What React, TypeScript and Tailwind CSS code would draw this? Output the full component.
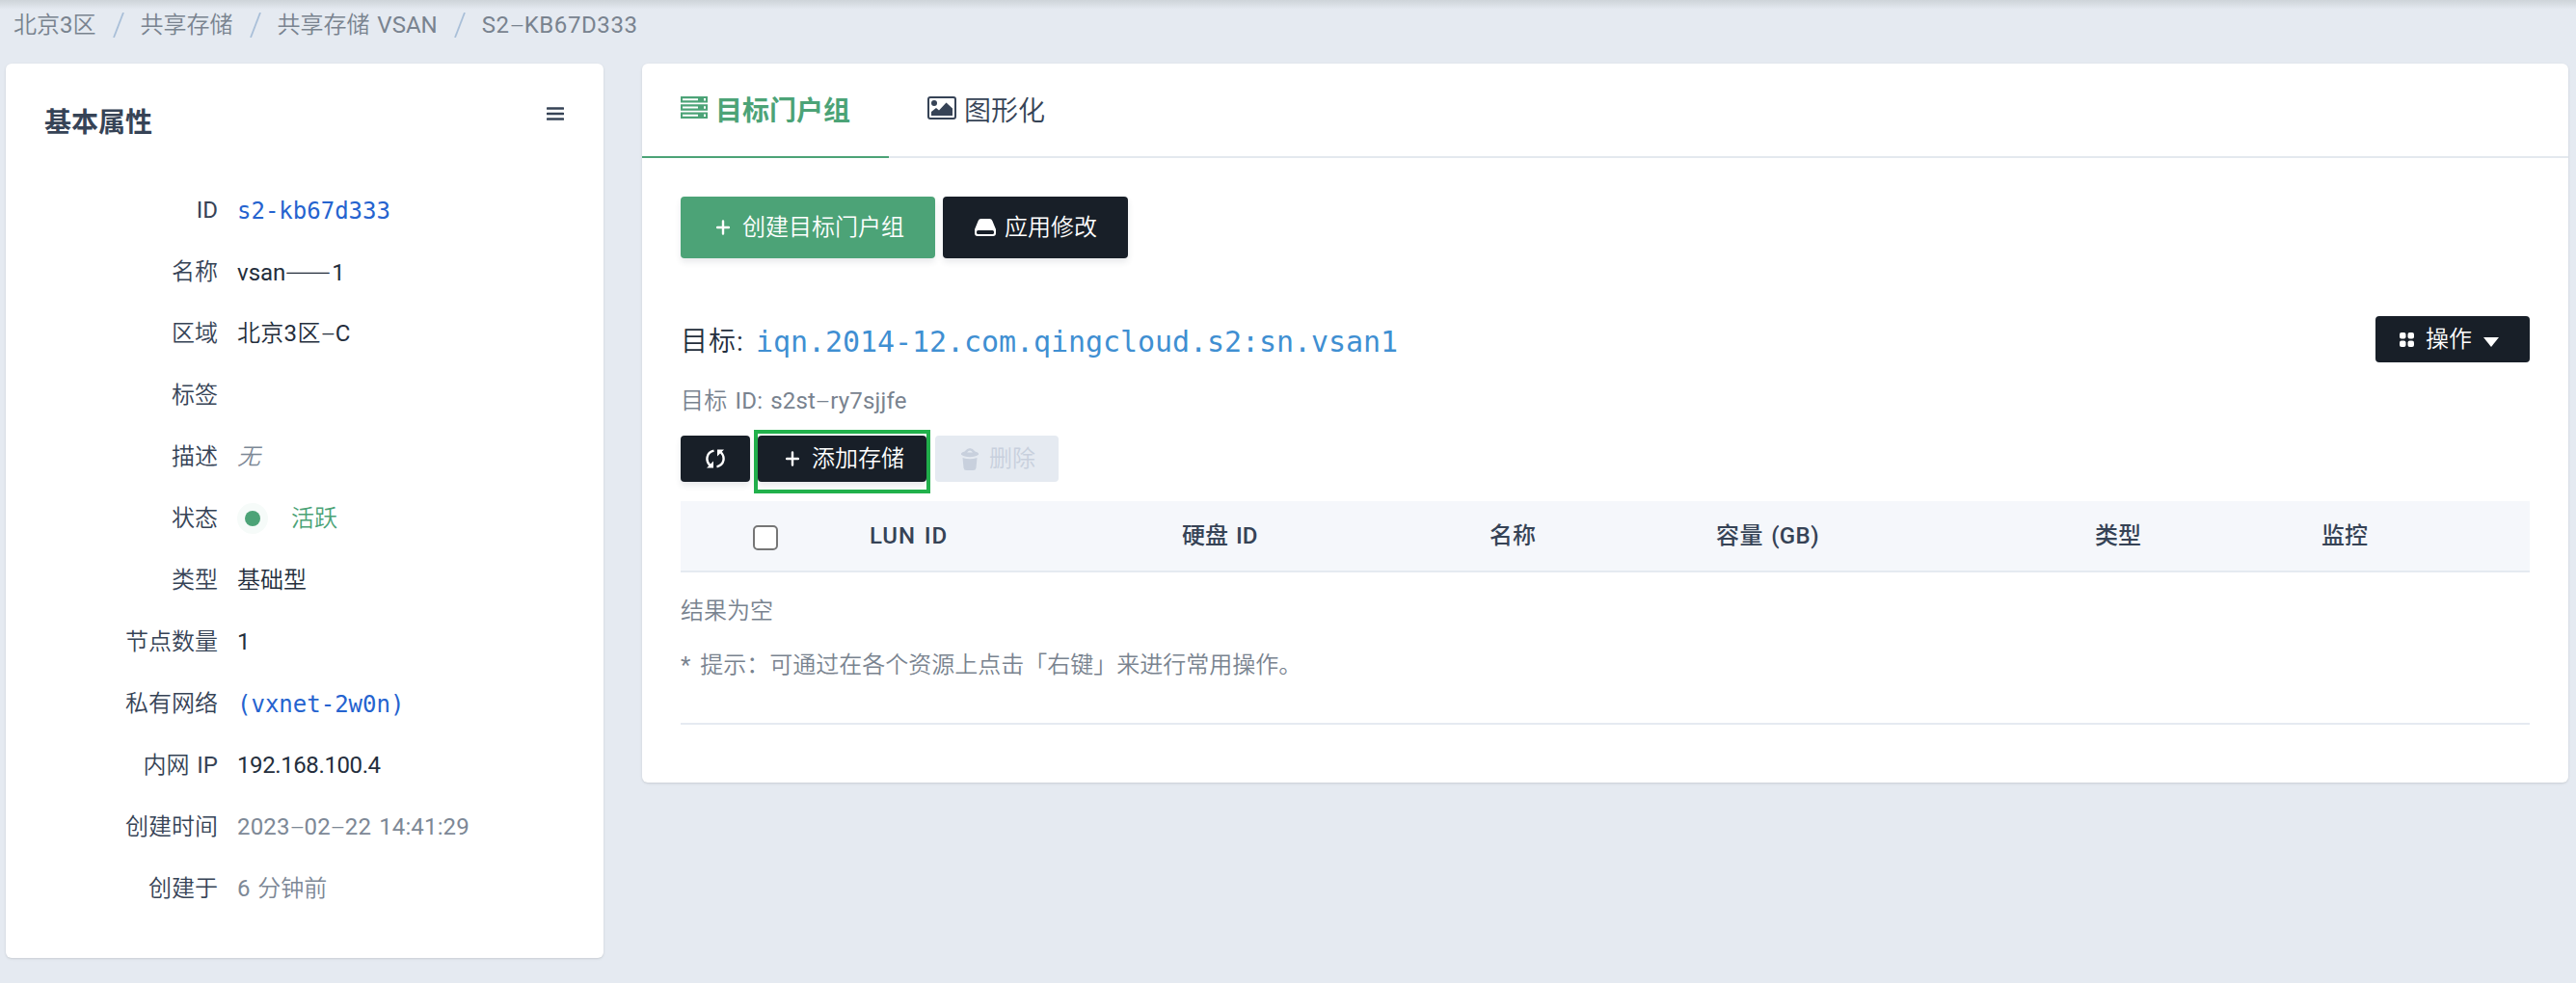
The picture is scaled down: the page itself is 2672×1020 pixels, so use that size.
import React from "react";

const sans = "font-['Roboto','Noto_Sans_CJK_SC',sans-serif]";
const mono = "font-['DejaVu_Sans_Mono','Noto_Sans_CJK_SC',monospace]";
const lift = "shadow-[0_4px_6px_rgba(36,46,66,0.1)]";

function Plus() {
  return (
    <svg width="14" height="16" viewBox="0 0 14 16" className="shrink-0">
      <path d="M7 1.5v13M1 8h12" stroke="currentColor" strokeWidth="2.4" strokeLinecap="round" />
    </svg>
  );
}

function Servers() {
  return (
    <svg width="28" height="23" viewBox="0 0 28 23" fill="currentColor" fillRule="evenodd" className="mb-[5px] shrink-0">
      <path d="M0 0h28v6.500H0zM2 2.200v2h16v-2zM24 2h2v2.500h-2z" />
      <path d="M0 8.200h28v6.500H0zM2 10.400v2h16v-2zM24 10.200h2v2.500h-2z" />
      <path d="M0 16.500h28V23H0zM2 18.700v2h16v-2zM24 18.500h2V21h-2z" />
    </svg>
  );
}

function Picture() {
  return (
    <svg width="30" height="24" viewBox="0 0 30 24" className="mb-1 shrink-0">
      <rect x="1" y="1" width="28" height="22" rx="2" fill="none" stroke="currentColor" strokeWidth="2" />
      <circle cx="7" cy="7" r="3" fill="currentColor" />
      <path d="M4 20v-4l5-4 3 2.500 7.500-8L26 12.500V20z" fill="currentColor" />
    </svg>
  );
}

function Drive() {
  return (
    <svg width="22" height="18" viewBox="0 0 22 18" className="shrink-0">
      <path
        d="M6.500 0h9q2 0 2.800 2L22 11v4q0 3-3 3H3q-3 0-3-3v-4L3.700 2Q4.500 0 6.500 0zM3.500 12Q2 12 2 13.500v1Q2 16 3.500 16h15q1.500 0 1.500-1.500v-1Q20 12 18.500 12z"
        fill="currentColor"
        fillRule="evenodd"
      />
    </svg>
  );
}

function Refresh() {
  return (
    <svg width="20" height="20" viewBox="0 0 20 20" className="shrink-0">
      <path d="M8.500 1.700C.5 3.500-.5 12 4.500 17M11.500 18.300c8-1.800 9-10.300 4-15.300" fill="none" stroke="currentColor" strokeWidth="2.400" />
      <path d="M1 19.500h7v-7zM19 .500h-7v7z" fill="currentColor" />
    </svg>
  );
}

function Trash() {
  return (
    <svg width="18" height="23" viewBox="0 0 18 23" fill="currentColor" className="shrink-0">
      <path d="M0 5.500Q1 3.800 3.500 3.400 6 .2 9 0q3 .2 5.500 3.400 2.500.4 3.500 2.100v1.300q-3 2.400-9 2.400T0 6.800zM6 4.600h6Q10.500 2.400 9 2.400T6 4.600z" fillRule="evenodd" />
      <path d="M1.500 10Q9 12.500 16.500 10l-1 10.500Q15.200 23 12.500 23h-7q-2.700 0-3-2.500z" />
    </svg>
  );
}

/* Sets Latin runs a step heavier than the Chinese text and draws hyphens wide. */
function Mixed({ text }: { text: string }) {
  return (
    <>
      {text.split(/([!-,.-~]+|-)/).map((p, i) => {
        if (p === "-") {
          return (
            <span key={i} className="inline-block w-[15px] scale-x-[2.100] text-center font-light tracking-normal">
              -
            </span>
          );
        }
        return i % 2 ? (
          <span key={i} className="font-normal">
            {p}
          </span>
        ) : (
          p
        );
      })}
    </>
  );
}

const crumbs = [
  { text: "北京3区", tracking: "" },
  { text: "共享存储", tracking: "" },
  { text: "共享存储 VSAN", tracking: "" },
  { text: "S2-KB67D333", tracking: "tracking-[0.600px]" },
];

const rows: { label: string; value: React.ReactNode }[] = [
  { label: "ID", value: <span className={`${mono} relative top-px text-[#2563cf]`}>s2-kb67d333</span> },
  {
    label: "名称",
    value: (
      <>
        <span className="font-normal">vsan</span>
        <span className="relative -top-px inline-block w-12 origin-left scale-x-[1.170] font-['Noto_Sans_CJK_SC']">——</span>
        <span className="font-normal">1</span>
      </>
    ),
  },
  {
    label: "区域",
    value: (
      <span className="tracking-[0.300px]">
        <Mixed text="北京3区-C" />
      </span>
    ),
  },
  { label: "标签", value: "" },
  { label: "描述", value: <span className="text-[#7d8896] italic">无</span> },
  {
    label: "状态",
    value: (
      <span className="flex items-center text-[#4ca377]">
        <span className="mr-6 flex size-8 items-center justify-center rounded-full bg-[#f6fbf9]">
          <span className="size-4 rounded-full bg-[#4ca377]" />
        </span>
        活跃
      </span>
    ),
  },
  { label: "类型", value: "基础型" },
  { label: "节点数量", value: <Mixed text="1" /> },
  { label: "私有网络", value: <span className={`${mono} relative top-px text-[#2563cf]`}>(vxnet-2w0n)</span> },
  {
    label: "内网 IP",
    value: (
      <span className="tracking-[-0.400px]">
        <Mixed text="192.168.100.4" />
      </span>
    ),
  },
  {
    label: "创建时间",
    value: (
      <span className="tracking-[0.150px] text-[#7d8896]">
        <Mixed text="2023-02-22 14:41:29" />
      </span>
    ),
  },
  {
    label: "创建于",
    value: (
      <span className="text-[#7d8896]">
        <Mixed text="6 分钟前" />
      </span>
    ),
  },
];

const columns = [
  { name: "LUN ID", width: "w-[324px]", tracking: "tracking-[0.900px]" },
  { name: "硬盘 ID", width: "w-[319px]", tracking: "" },
  { name: "名称", width: "w-[235px]", tracking: "" },
  { name: "容量 (GB)", width: "w-[393px]", tracking: "tracking-[0.400px]" },
  { name: "类型", width: "w-[235px]", tracking: "" },
  { name: "监控", width: "w-[120px]", tracking: "" },
];

export default function App() {
  return (
    <div className={`h-[1020px] w-[2672px] overflow-hidden bg-[#e5eaf1] text-2xl font-[350] text-[#364356] [word-spacing:2px] ${sans}`}>
      <div className="h-2.5 bg-linear-to-b from-[#ced4d9] to-[#e5eaf1]" />
      <nav className="flex h-14 items-start pt-px pl-3.5 text-[#79838f]">
        {crumbs.map((c, i) => (
          <div key={c.text} className={`flex items-center leading-[30px] ${c.tracking}`}>
            {i > 0 && (
              <svg width="12" height="26" viewBox="0 0 12 26" className="mr-[17px] ml-[17px]">
                <path d="M11 0 1 26" stroke="#a9bfd8" strokeWidth="1.800" />
              </svg>
            )}
            <span>
              <Mixed text={c.text} />
            </span>
          </div>
        ))}
      </nav>

      <main className="flex items-start gap-10 pl-1.5">
        <aside className="h-[928px] w-[620px] rounded-md bg-white px-10 pt-10 shadow-sm">
          <header className="flex h-20 items-start justify-between">
            <h2 className="mt-0.5 text-[28px] leading-10 font-bold">基本属性</h2>
            <svg width="18" height="14" viewBox="0 0 18 14" className="mt-[5px] mr-px">
              <path d="M1 1.500h16M1 7h16M1 12.500h16" stroke="currentColor" strokeWidth="2.600" strokeLinecap="round" />
            </svg>
          </header>
          <dl>
            {rows.map((r) => (
              <div key={r.label} className="flex h-16 items-center gap-5 whitespace-nowrap">
                <dt className="w-[180px] text-right">
                  <Mixed text={r.label} />
                </dt>
                <dd className="text-[#242e3c]">{r.value}</dd>
              </div>
            ))}
          </dl>
        </aside>

        <section className="h-[746px] w-[1998px] rounded-md bg-white shadow-sm">
          <div className="flex h-[98px] border-b-2 border-[#e4e9ee] text-[28px]">
            <div className="-mb-0.5 flex w-64 items-center gap-2 border-b-2 border-[#4ca377] pl-10 font-bold text-[#4ca377]">
              <Servers />
              <span className="mt-1">目标门户组</span>
            </div>
            <div className="flex items-center gap-2 pl-10">
              <Picture />
              <span className="mt-1">图形化</span>
            </div>
          </div>
          <div className="px-10 pt-10">
            <div className="flex gap-2 text-white">
              <button className={`flex h-16 w-[264px] items-center gap-[13px] rounded bg-[#4ca377] pl-[37px] ${lift}`}>
                <Plus />
                创建目标门户组
              </button>
              <button className={`flex h-16 w-48 items-center gap-[9px] rounded bg-[#181f28] pl-[33px] ${lift}`}>
                <Drive />
                应用修改
              </button>
            </div>

            <div className="mt-[60px] flex items-start justify-between">
              <h3 className="flex items-center text-[28px] leading-[54px] text-[#242e3c]">
                <span className="w-[78px] tracking-[1px]">
                  <Mixed text="目标:" />
                </span>
                <span className={`${mono} text-[30px] tracking-[-0.060px] text-[#3f8fd2]`}>iqn.2014-12.com.qingcloud.s2:sn.vsan1</span>
              </h3>
              <button className="flex h-12 w-40 items-center rounded bg-[#181f28] pl-[25px] text-white">
                <svg width="15" height="15" viewBox="0 0 15 15" fill="currentColor" className="mr-3">
                  <rect width="6.500" height="6.500" rx="2" />
                  <rect x="8.500" width="6.500" height="6.500" rx="2" />
                  <rect y="8.500" width="6.500" height="6.500" rx="2" />
                  <rect x="8.500" y="8.500" width="6.500" height="6.500" rx="2" />
                </svg>
                操作
                <svg width="16" height="10" viewBox="0 0 16 10" className="mt-1.5 ml-3">
                  <path d="M0 0h16L8 10z" fill="currentColor" />
                </svg>
              </button>
            </div>
            <p className="mt-[18px] leading-8 tracking-[0.200px] text-[#79838f]">
              <Mixed text="目标 ID: s2st-ry7sjjfe" />
            </p>

            <div className="mt-5 flex h-12 text-white">
              <button className={`flex w-[72px] items-center justify-center rounded bg-[#181f28] ${lift}`}>
                <Refresh />
              </button>
              <div className="-mt-1.5 -mb-3 ml-1 border-4 border-[#22b14c] pt-0.5">
                <button className={`flex h-12 w-[175px] items-center gap-[13px] rounded bg-[#181f28] pl-[29px] ${lift}`}>
                  <Plus />
                  添加存储
                </button>
              </div>
              <button className="ml-[5px] flex w-32 items-center gap-[11px] rounded bg-[#e5eaf1] pl-[27px] text-[#c8d0dd]">
                <Trash />
                删除
              </button>
            </div>

            <div className="mt-5 flex h-[74px] items-center border-b-2 border-[#e5eaf1] bg-[#f5f7fb] font-medium whitespace-nowrap">
              <span className="mt-1 mr-[95px] ml-[75px] size-[26px] rounded-[5px] border-2 border-[#767676] bg-white" />
              {columns.map((c) => (
                <span key={c.name} className={`${c.width} ${c.tracking} shrink-0`}>
                  {c.name}
                </span>
              ))}
            </div>
            <p className="mt-6 leading-8 text-[#79838f]">结果为空</p>
            <p className="mt-6 h-[76px] leading-8 text-[#79838f] [word-spacing:4px]">
              <Mixed text="* 提示：可通过在各个资源上点击「右键」来进行常用操作。" />
            </p>
            <div className="border-b-2 border-[#e5eaf1]" />
          </div>
        </section>
      </main>
    </div>
  );
}
